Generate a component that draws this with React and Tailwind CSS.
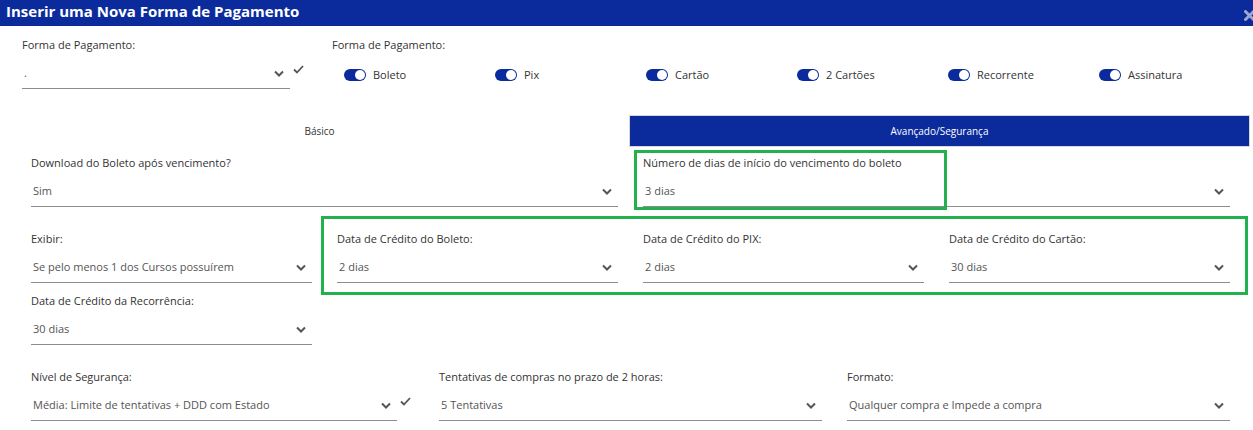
import React from "react";

const Chevron = () => (
  <svg width="10" height="7" viewBox="0 0 10 7" className="shrink-0">
    <path d="M1 1.5 L5 5.5 L9 1.5" fill="none" stroke="#555" strokeWidth="2" />
  </svg>
);

const Check = () => (
  <svg width="11" height="9" viewBox="0 0 11 9">
    <path d="M1 4.5 L4 7.5 L10 1" fill="none" stroke="#555" strokeWidth="1.8" />
  </svg>
);

function Select({ value, check, checkW = "w-[17px]" }) {
  return (
    <div className="flex items-end">
      <div className="flex-1 h-[36px] border-b border-[#8c8c8c] flex items-end justify-between pb-[7px] pl-[2px] pr-[6px]">
        <span className="leading-[16px] text-[11px] text-[#555] whitespace-nowrap">{value}</span>
        <div className="h-[16px] flex items-center">
          <Chevron />
        </div>
      </div>
      {check && (
        <div className={`${checkW} shrink-0 flex justify-center mb-[15px]`}>
          <Check />
        </div>
      )}
    </div>
  );
}

function Field({ label, value, check, className = "" }) {
  return (
    <div className={className}>
      <div className="h-[16px] leading-[16px] text-[11px] text-[#333] whitespace-nowrap">{label}</div>
      <Select value={value} check={check} />
    </div>
  );
}

function Toggle({ label }) {
  return (
    <div className="w-[151px] flex items-center gap-[7px]">
      <div className="w-[22px] h-[12px] rounded-full bg-[#0b2b9c] flex items-center justify-end pr-[1px]">
        <div className="w-[10px] h-[10px] rounded-full bg-white" />
      </div>
      <span className="text-[11px] text-[#333] leading-[16px]">{label}</span>
    </div>
  );
}

export default function App() {
  return (
    <div
      className="relative w-[1253px] h-[430px] bg-white overflow-hidden"
      style={{ fontFamily: "'Open Sans', 'Noto Sans', sans-serif" }}
    >
      <div className="h-[26px] bg-[#0b2b9c] flex items-center justify-between pl-[6px]">
        <span className="text-white text-[15px] font-bold leading-[20px] -mt-[4px]">
          Inserir uma Nova Forma de Pagamento
        </span>
        <svg width="11" height="11" viewBox="0 0 11 11" className="mr-[-2px] mt-[5px] shrink-0">
          <path d="M1.5 1.5 L9.5 9.5 M9.5 1.5 L1.5 9.5" stroke="#9ca8d4" strokeWidth="3" strokeLinecap="round" />
        </svg>
      </div>

      <div className="flex pt-[11px] pl-[22px]">
        <div className="w-[284px]">
          <div className="h-[16px] leading-[16px] text-[11px] text-[#333]">Forma de Pagamento:</div>
          <Select value="." check checkW="w-[16px]" />
        </div>
        <div className="ml-[26px]">
          <div className="h-[16px] leading-[16px] text-[11px] text-[#333]">Forma de Pagamento:</div>
          <div className="flex mt-[10px] h-[24px] items-center pl-[12px]">
            <Toggle label="Boleto" />
            <Toggle label="Pix" />
            <Toggle label="Cartão" />
            <Toggle label="2 Cartões" />
            <Toggle label="Recorrente" />
            <Toggle label="Assinatura" />
          </div>
        </div>
      </div>

      <div className="mt-[26px] mx-[10px] w-[1240px] flex h-[32px]">
        <div className="flex-1 flex items-center justify-center text-[10px] text-[#333]">Básico</div>
        <div className="flex-1 flex items-center justify-center text-[10px] text-white bg-[#0b2b9c] border border-[#d8d8d8]">
          Avançado/Segurança
        </div>
      </div>

      <div className="pl-[31px] pr-[23px]">
        <div className="mt-[8px] grid grid-cols-2 gap-x-[25px]">
          <Field label="Download do Boleto após vencimento?" value="Sim" />
          <Field label="Número de dias de início do vencimento do boleto" value="3 dias" />
        </div>
        <div className="mt-[24px] grid grid-cols-4 gap-x-[25px]">
          <Field label="Exibir:" value="Se pelo menos 1 dos Cursos possuírem" />
          <Field label="Data de Crédito do Boleto:" value="2 dias" />
          <Field label="Data de Crédito do PIX:" value="2 dias" />
          <Field label="Data de Crédito do Cartão:" value="30 dias" />
        </div>
        <div className="mt-[10px] grid grid-cols-4 gap-x-[25px]">
          <Field label="Data de Crédito da Recorrência:" value="30 dias" />
        </div>
        <div className="mt-[24px] grid grid-cols-3 gap-x-[25px]">
          <Field label="Nível de Segurança:" value="Média: Limite de tentativas + DDD com Estado" check />
          <Field label="Tentativas de compras no prazo de 2 horas:" value="5 Tentativas" />
          <Field label="Formato:" value="Qualquer compra e Impede a compra" />
        </div>
      </div>

      <div className="absolute left-[634px] top-[150px] w-[313px] h-[60px] border-[3px] border-[#22b14c]" />
      <div className="absolute left-[321px] top-[216px] w-[927px] h-[79px] border-[3px] border-[#22b14c]" />
    </div>
  );
}
